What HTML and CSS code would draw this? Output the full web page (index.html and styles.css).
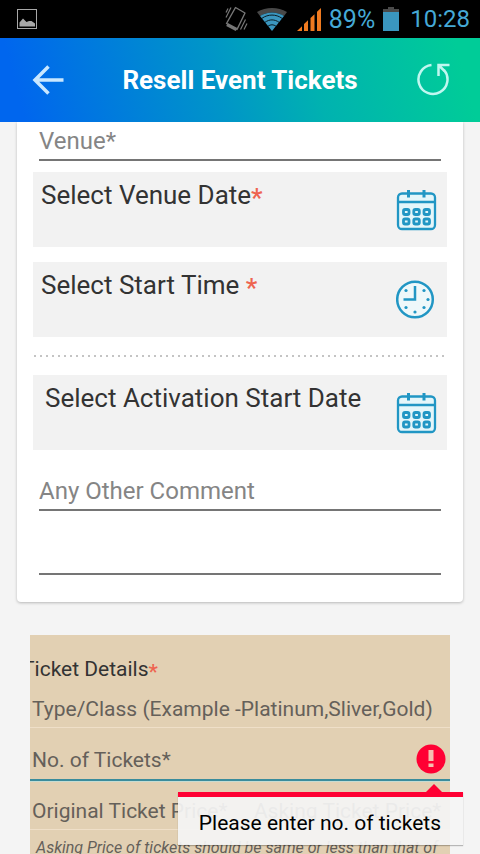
FILE: index.html
```html
<!DOCTYPE html>
<html lang="en">
<head>
<meta charset="utf-8">
<meta name="viewport" content="width=device-width, initial-scale=1">
<title>Resell Event Tickets</title>
<link rel="stylesheet" href="styles.css">
</head>
<body>
<svg class="sprite" aria-hidden="true">
  <symbol id="calendar" viewBox="0 0 42 42">
    <rect x="2" y="5" width="37" height="35" rx="4" fill="#e4f6fa"/>
    <g fill="none" stroke="#2196c4" stroke-width="2.300">
      <rect x="2" y="4.500" width="37" height="35.500" rx="4"/>
      <path d="M2 13h37"/>
      <path d="M12.500 1v7.500M28 1v7.500" stroke-width="3"/>
      <g stroke-width="2.800">
        <rect x="7.500" y="20.500" width="5.500" height="5" rx="1.500"/>
        <rect x="17.800" y="20.500" width="5.500" height="5" rx="1.500"/>
        <rect x="28" y="20.500" width="5.500" height="5" rx="1.500"/>
        <rect x="7.500" y="30" width="5.500" height="5" rx="1.500"/>
        <rect x="17.800" y="30" width="5.500" height="5" rx="1.500"/>
        <rect x="28" y="30" width="5.500" height="5" rx="1.500"/>
      </g>
    </g>
  </symbol>
</svg>

<div class="status">
  <svg width="22" height="22" viewBox="0 0 22 22" aria-hidden="true">
    <rect x="1.500" y="1.500" width="19" height="19" fill="none" stroke="#a8a8a8"/>
    <path d="M3.500 18.500v-4l3.500-4 3.500 3.500 2.500-1h2.500l3.500 2.500v3z" fill="#a8a8a8"/>
  </svg>
  <div class="status-right">
    <svg class="vibrate" width="24" height="26" viewBox="0 0 24 26" fill="none" stroke="#777" aria-hidden="true">
      <path d="M10.500 1.500l9.500 5.500-8 16.500-10.500-6z" stroke-width="1.400" stroke-linejoin="round"/>
      <path d="M2 18.500l9.500 5" stroke-width="3.500"/>
      <path d="M1 6.500l2-4M1 11.500l5-10M15.500 23.500l5-10M19 23.500l3-6" stroke-width="1.200"/>
    </svg>
    <svg class="wifi" width="30" height="23" viewBox="0 0 30 23" fill="none" aria-hidden="true">
      <path d="M0 4C9-1.300 21-1.300 30 4L27 8C20 3.200 10 3.200 3 8z" fill="#484848"/>
      <path d="M3 8C10 3.200 20 3.200 27 8L15 23z" fill="#3a96bf"/>
      <g stroke="#0a1c24" stroke-width="1">
        <path d="M5 10.300c6-4.300 14-4.300 20 0"/>
        <path d="M8 14.300c4.300-3.200 9.700-3.200 14 0"/>
        <path d="M11 18.200c2.500-1.900 5.500-1.900 8 0"/>
      </g>
    </svg>
    <svg class="signal" width="24" height="23" viewBox="0 0 24 23" fill="#f07a20" aria-hidden="true">
      <path d="M0 23l5-4.800V23zM7 23v-7l4-3.800V23zM13.500 23V10l4-3.800V23zM20 23V3.800L24 0v23z"/>
    </svg>
    <span class="percent">89%</span>
    <svg class="battery" width="16" height="24" viewBox="0 0 16 24" aria-hidden="true">
      <path d="M0 2h5V0h6v2h5v4H0z" fill="#4a4a4a"/>
      <path d="M0 5h16v19H0z" fill="#3a96bf"/>
    </svg>
    <span class="clock">10:28</span>
  </div>
</div>

<header class="bar">
  <button class="icon-button" type="button" aria-label="Back">
    <svg width="32" height="30" viewBox="0 0 32 30" fill="none" stroke="#c9e7ff" stroke-width="3.500" aria-hidden="true">
      <path d="M31.500 15H3M16.500 1.500L3 15l13.500 13.500"/>
    </svg>
  </button>
  <h1>Resell Event Tickets</h1>
  <button class="icon-button" type="button" aria-label="Refresh">
    <svg width="34" height="34" viewBox="0 0 34 34" fill="none" stroke="#c0f7f0" stroke-width="2.500" aria-hidden="true">
      <path d="M15.500 2A14.500 14.500 0 1 0 28 7"/>
      <path d="M22.500 13V2h11M23 2.500l5.500 5.500"/>
    </svg>
  </button>
</header>

<main>
  <section class="card">
    <input class="line-field" type="text" placeholder="Venue*" aria-label="Venue">
    <button class="picker" type="button">
      <span>Select Venue Date<span class="req">*</span></span>
      <svg width="42" height="42" aria-hidden="true"><use href="#calendar"/></svg>
    </button>
    <button class="picker" type="button">
      <span>Select Start Time <span class="req">*</span></span>
      <svg width="42" height="42" viewBox="0 0 42 42" fill="none" stroke="#2196c4" aria-hidden="true">
        <circle cx="19" cy="20.500" r="17.800" stroke-width="2.500" fill="#eef8fa"/>
        <path d="M19 7v13.500H7.500" stroke-width="2.500"/>
        <g fill="#2196c4" stroke="none">
          <circle cx="10" cy="11.500" r="1.600"/><circle cx="28" cy="11.500" r="1.600"/>
          <circle cx="32" cy="20.500" r="1.600"/><circle cx="28" cy="28.500" r="1.600"/>
          <circle cx="19" cy="33" r="1.600"/><circle cx="10" cy="28.500" r="1.600"/>
        </g>
      </svg>
    </button>
    <div class="dots"></div>
    <button class="picker inset" type="button">
      <span>Select Activation Start Date</span>
      <svg width="42" height="42" aria-hidden="true"><use href="#calendar"/></svg>
    </button>
    <div class="comments">
      <input class="line-field" type="text" placeholder="Any Other Comment" aria-label="Any other comment">
      <input class="line-field" type="text" aria-label="Comment, second line">
    </div>
  </section>

  <section class="tickets">
    <h2><span>Ticket Details<span class="req">*</span></span></h2>
    <input class="plain-field" type="text" placeholder="Type/Class (Example -Platinum,Sliver,Gold)" aria-label="Ticket type or class">
    <div class="count">
      <input class="plain-field" type="text" placeholder="No. of Tickets*" aria-label="Number of tickets" aria-describedby="count-error">
      <svg class="alert" width="30" height="30" viewBox="0 0 30 30" aria-hidden="true">
        <circle cx="15" cy="15" r="14.500" fill="#ff0033"/>
        <path d="M12.500 6h5v11h-5zM12.500 19.500h5v3.500h-5z" fill="#f5bfb0"/>
      </svg>
      <div class="error" id="count-error" role="alert">Please enter no. of tickets</div>
    </div>
    <div class="prices">
      <input class="plain-field" type="text" placeholder="Original Ticket Price*" aria-label="Original ticket price">
      <input class="plain-field" type="text" placeholder="Asking Ticket Price*" aria-label="Asking ticket price">
    </div>
    <p class="note">Asking Price of tickets should be same or less than that of</p>
  </section>
</main>
</body>
</html>
```

FILE: styles.css
```css
* { box-sizing: border-box; }

body {
  margin: 0;
  height: 100vh;
  display: flex;
  flex-direction: column;
  overflow: hidden;
  background: #f4f4f4;
  color: #333;
  font-family: Roboto, "Liberation Sans", sans-serif;
}

button, input {
  margin: 0;
  border: 0;
  border-radius: 0;
  background: none;
  font: inherit;
  color: inherit;
}

svg { display: block; flex: none; }
.sprite { position: absolute; width: 0; height: 0; }

.status {
  flex: none;
  height: 38px;
  padding: 0 10px 0 16px;
  display: flex;
  align-items: center;
  justify-content: space-between;
  background: #000;
  color: #45a9d6;
  font-size: 25px;
}
.status-right { display: flex; align-items: center; }
.wifi { margin-left: 8px; }
.signal { margin-left: 10px; }
.percent { margin-left: 8px; }
.battery { margin: 0 11px 0 8px; }
.clock { font-size: 24px; }

.bar {
  flex: none;
  height: 84px;
  padding: 0 30px 0 32px;
  display: flex;
  align-items: center;
  justify-content: space-between;
  background: linear-gradient(75deg, #0066ee 5%, #0095c8 45%, #00b2b0 65%, #00cc98 95%);
}
.bar h1 {
  margin: 0;
  color: #fff;
  font-size: 26px;
  font-weight: 700;
}
.icon-button { padding: 0; cursor: pointer; }

main { flex: 1; min-height: 0; overflow: hidden; }

.card {
  margin: 0 17px;
  padding: 0 16px 27px;
  background: #fff;
  border-radius: 0 0 4px 4px;
  box-shadow: 0 1px 3px rgba(0, 0, 0, .25);
}

.line-field {
  display: block;
  width: calc(100% - 12px);
  height: 39px;
  margin: 0 6px 11px;
  padding: 0;
  border-bottom: 2px solid #757575;
  font-size: 24px;
}
.line-field::placeholder { color: #858585; opacity: 1; }

.picker {
  display: flex;
  justify-content: space-between;
  align-items: flex-start;
  width: 100%;
  height: 75px;
  padding: 7px 9px 0 8px;
  background: #f2f2f2;
  font-size: 26px;
  line-height: 32px;
  text-align: left;
  cursor: pointer;
}
.picker + .picker { margin-top: 15px; }
.picker svg { margin-top: 10px; }
.picker.inset { padding-left: 12px; }
.req {
  color: #ee6450;
  font-weight: 500;
  line-height: 0;
  vertical-align: -3px;
}

.dots {
  height: 2px;
  margin: 18px 0 18px 1px;
  background: repeating-linear-gradient(90deg, #c4c4c4 0 2px, transparent 2px 6px);
}

.comments { padding-top: 22px; }
.comments .line-field { margin-bottom: 0; }
.comments .line-field + .line-field { height: 64px; }

.tickets {
  margin: 33px 30px 0;
  height: 300px;
  padding-top: 18px;
  background: #e2d0b3;
}
.tickets h2 {
  margin: 0;
  overflow: hidden;
  font-size: 21px;
  font-weight: 400;
  line-height: 32px;
  color: #333;
}
.tickets h2 > span { margin-left: -8px; }

.plain-field {
  display: block;
  width: 100%;
  height: 43px;
  padding: 6px 0 0 2px;
  border-bottom: 1px solid #efdfc8;
  font-size: 21px;
}
.plain-field::placeholder { color: #65605a; opacity: 1; }

.count { position: relative; }
.count .plain-field {
  height: 53px;
  padding-top: 12px;
  border-bottom: 2px solid #3a8c9c;
  box-shadow: 0 1px 0 #c6dcd2;
}
.alert { position: absolute; right: 4px; top: 16px; }

.error {
  position: absolute;
  z-index: 1;
  right: -13px;
  top: 64px;
  height: 53px;
  padding: 5px 22px 0 21px;
  border-top: 5px solid #ff0033;
  background: rgba(244, 244, 244, .93);
  box-shadow: 0 1px 1px rgba(0, 0, 0, .25);
  color: #000;
  font-size: 21px;
  line-height: 42px;
  white-space: nowrap;
}
.error::before {
  content: "";
  position: absolute;
  right: 21px;
  top: -13px;
  border: 8px solid transparent;
  border-top: 0;
  border-bottom-color: #ff0033;
}

.prices { display: flex; }
.prices .plain-field { height: 49px; padding-top: 12px; min-width: 0; }
.prices .plain-field:last-child { padding-left: 18px; }

.note {
  margin: 8px 6px 0;
  font-size: 16px;
  font-style: italic;
  line-height: 20px;
  color: #65605a;
  white-space: nowrap;
}
```
